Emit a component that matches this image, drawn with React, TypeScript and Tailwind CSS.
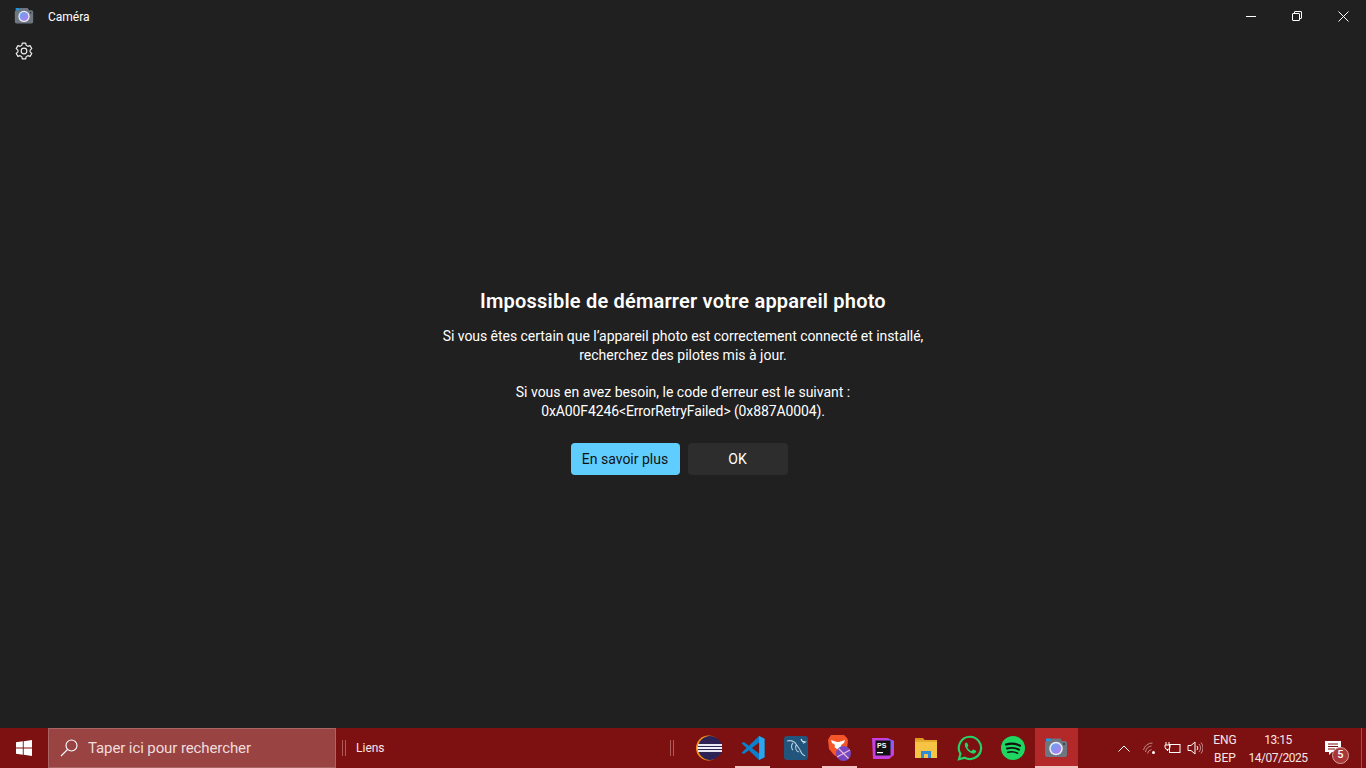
import React from "react";

function CameraIcon({ size = 20 }: { size?: number }) {
  return (
    <svg width={size} height={size} viewBox="0 0 24 24">
      <defs>
        <linearGradient id="lens" x1="0" y1="0" x2="1" y2="1">
          <stop offset="0" stopColor="#62a8f4" />
          <stop offset="1" stopColor="#b878ec" />
        </linearGradient>
      </defs>
      <rect x="2" y="2.500" width="5" height="3" fill="#1e9be8" />
      <path d="M1 7a2 2 0 0 1 2-2h3l1.500-2.500h9L18 5h3a2 2 0 0 1 2 2v12a2 2 0 0 1-2 2H3a2 2 0 0 1-2-2z" fill="#6d7681" />
      <circle cx="12" cy="12.500" r="6.800" fill="#e8edf2" />
      <circle cx="12" cy="12.500" r="5.200" fill="url(#lens)" />
      <circle cx="20" cy="8" r="0.900" fill="#2a2f36" />
    </svg>
  );
}

function Eclipse() {
  return (
    <svg width="26" height="26" viewBox="0 0 26 26">
      <circle cx="12.500" cy="13" r="12.500" fill="#f7941e" />
      <circle cx="14" cy="13" r="12" fill="#2c2255" />
      <rect x="2" y="9" width="24" height="2" fill="#e8e6f2" />
      <rect x="1.500" y="12" width="24.500" height="2" fill="#f2f0f8" />
      <rect x="2" y="15" width="24" height="2" fill="#e8e6f2" />
    </svg>
  );
}

function VSCode() {
  return (
    <svg width="26" height="26" viewBox="0 0 24 24">
      <path d="M17.600 1 8.200 10 3.600 6.400 1.400 7.600 6 12l-4.600 4.400 2.200 1.200L8.200 14l9.400 9 5-2.400V3.400z" fill="#0a7fcb" />
      <path d="M17.600 1l5 2.400v17.200l-5 2.400z" fill="#2aa5ee" />
      <path d="M17.600 7 11 12l6.600 5z" fill="#7d1010" />
    </svg>
  );
}

function MySQL() {
  return (
    <svg width="24" height="24" viewBox="0 0 24 24">
      <rect width="24" height="24" rx="3" fill="#21557c" />
      <path d="M3 5c4-1 7 0 9 3s4 5 5 8 3 3 4 4M9 7c-2 2-2 5 0 7M12 9c-1 3 0 6 3 7" fill="none" stroke="#b9cedd" strokeWidth="1.100" />
      <path d="M17 3l1.500 2.500L21 6l-2 1.200" fill="none" stroke="#d8e4ec" strokeWidth="1.300" />
    </svg>
  );
}

function Brave() {
  return (
    <svg width="26" height="28" viewBox="0 0 26 28">
      <path d="M5 1h13l3 3 1 2-1 9-5 6-4 2-4-2-5-6-1-9 1-2z" fill="#f4562a" />
      <path d="M5 6l6 2h2l6-2-1 3-3 2 .5 2-3.500 3-3.500-3 .5-2-3-2z" fill="#fff" />
      <circle cx="17.500" cy="19.500" r="7.500" fill="#7447c0" />
      <path d="M11 23 24 16M12.500 14.500l10 10" stroke="#e8b8dc" strokeWidth="1.200" />
    </svg>
  );
}

function PhpStorm() {
  return (
    <svg width="24" height="24" viewBox="0 0 24 24">
      <path d="M1 2h15l7 3v14l-5 4H2z" fill="#c640e0" />
      <path d="M16 2l7 3v8l-4 1z" fill="#8a5cf0" />
      <rect x="4.500" y="4.500" width="15" height="15" fill="#111" />
      <text x="6" y="12" fontSize="7" fontWeight="700" fill="#fff" fontFamily="Liberation Sans, sans-serif">PS</text>
      <rect x="6" y="16" width="6" height="1.200" fill="#fff" />
    </svg>
  );
}

function Folder() {
  return (
    <svg width="24" height="22" viewBox="0 0 24 22">
      <path d="M1 1h8l2 2.500H1z" fill="#d99a1c" />
      <rect x="1" y="3" width="22" height="18" fill="#f6c344" />
      <rect x="1" y="3" width="22" height="2" fill="#e5a92b" />
      <path d="M7 14h10v7h-3v-4h-4v4H7z" fill="#2f8bd6" />
    </svg>
  );
}

function WhatsApp() {
  return (
    <svg width="26" height="26" viewBox="0 0 24 24">
      <path d="M12 1.600A10.300 10.300 0 0 0 3.200 17.300L1.800 22.400l5.300-1.400A10.300 10.300 0 1 0 12 1.600z" fill="none" stroke="#25d366" strokeWidth="2" />
      <path d="M8.600 6.900c-.5 0-1.400.8-1.400 2.200 0 3 3.900 7.800 8 8.100 1.400 0 2.500-1 2.500-2.100 0-.4-.2-.5-.5-.7l-2-1c-.4-.1-.6 0-.8.3l-.7.9c-.2.2-.4.2-.7.1-1.300-.6-2.600-1.800-3.300-3-.1-.3-.1-.5.1-.7l.5-.6c.2-.3.2-.5.1-.8l-.8-2c-.2-.4-.4-.5-.7-.5z" fill="#25d366" />
    </svg>
  );
}

function Spotify() {
  return (
    <svg width="24" height="24" viewBox="0 0 24 24">
      <circle cx="12" cy="12" r="12" fill="#1ed760" />
      <path d="M5 8.500c4.500-1.300 10-1 14 1.200" fill="none" stroke="#111" strokeWidth="2.200" strokeLinecap="round" />
      <path d="M6 12.500c4-1.100 8.500-.7 12 1.200" fill="none" stroke="#111" strokeWidth="1.900" strokeLinecap="round" />
      <path d="M6.800 16.200c3.400-.8 7-.5 9.800 1" fill="none" stroke="#111" strokeWidth="1.600" strokeLinecap="round" />
    </svg>
  );
}

function Gear() {
  return (
    <svg width="18" height="18" viewBox="0 0 24 24" fill="none" stroke="#f0f0f0" strokeWidth="1.500" strokeLinejoin="round">
      <path d="M9.700 1.500h4.600l.6 3 2.300 1.300 2.900-1 2.300 4-2.300 2v2.400l2.300 2-2.300 4-2.900-1-2.300 1.300-.6 3H9.700l-.6-3-2.300-1.300-2.900 1-2.300-4 2.300-2v-2.400l-2.300-2 2.300-4 2.900 1L9.100 4.500z" />
      <circle cx="12" cy="12" r="3.800" />
    </svg>
  );
}

function TaskIcon({ children, mark, active }: { children: React.ReactNode; mark?: boolean; active?: boolean }) {
  return (
    <div className={`relative flex h-10 w-[43.4px] items-center justify-center ${active ? "bg-[#b32828]" : ""}`}>
      {children}
      {mark && <div className={`absolute bottom-0 h-[2px] bg-[#f2c4c4] ${active ? "inset-x-0" : "inset-x-1"}`} />}
    </div>
  );
}

export default function App() {
  return (
    <div className="flex h-[768px] w-[1366px] flex-col overflow-hidden bg-[#202020] font-['Roboto','Open_Sans',sans-serif] text-white">
      <header className="flex h-8 shrink-0 items-center">
        <div className="ml-[14px] flex w-5 items-center"><CameraIcon /></div>
        <span className="ml-[14px] pt-[2px] text-xs">Caméra</span>
        <div className="ml-auto flex h-8 items-center">
          <div className="flex w-[46px] justify-center">
            <svg width="10" height="10" viewBox="0 0 10 10"><path d="M0 5.500h10" stroke="#fff" /></svg>
          </div>
          <div className="flex w-[46px] justify-center">
            <svg width="10" height="10" viewBox="0 0 10 10" fill="none" stroke="#fff"><rect x="0.500" y="2.500" width="7" height="7" rx="0.500" /><path d="M2.500 2.500V1a.5.5 0 0 1 .5-.5h6a.5.5 0 0 1 .5.5v6a.5.5 0 0 1-.5.5H7.500" /></svg>
          </div>
          <div className="flex w-[46px] justify-center">
            <svg width="11" height="11" viewBox="0 0 11 11" stroke="#fff"><path d="M.5.500l10 10M10.500.500l-10 10" /></svg>
          </div>
        </div>
      </header>
      <div className="flex h-9 shrink-0 items-center pl-[15px] pt-[2px]"><Gear /></div>

      <main className="flex flex-1 flex-col items-center pt-[219px]">
        <h1 className="text-[20px] leading-7 font-semibold tracking-[0.2px]">Impossible de démarrer votre appareil photo</h1>
        <div className="mt-[12px] text-center text-sm leading-[18.700px]">
          <p className="tracking-[-0.04px]">Si vous êtes certain que l’appareil photo est correctement connecté et installé,</p>
          <p>recherchez des pilotes mis à jour.</p>
          <p className="mt-[18.500px]">Si vous en avez besoin, le code d’erreur est le suivant :</p>
          <p className="tracking-[-0.12px]">0xA00F4246&lt;ErrorRetryFailed&gt; (0x887A0004).</p>
        </div>
        <div className="mt-[23px] flex gap-2 pr-[8px]">
          <button className="h-8 w-[109px] rounded-[4px] bg-[#60cdff] text-sm text-[#111]">En savoir plus</button>
          <button className="h-8 w-[100px] rounded-[4px] bg-[#2d2d2d] text-sm text-white">OK</button>
        </div>
      </main>

      <footer className="flex h-10 shrink-0 items-center bg-[#7d1010]">
        <div className="flex h-10 w-[48px] shrink-0 items-center justify-center">
          <svg width="16" height="16" viewBox="0 0 16 16" fill="#fff"><path d="M0 2.300 6.800 1.300v6.200H0zM7.700 1.200 16 0v7.500H7.700zM0 8.400h6.800v6.300L0 13.700zM7.700 8.400H16V16l-8.300-1.200z" /></svg>
        </div>
        <div className="flex h-10 w-[288px] shrink-0 items-center border border-[#a96464] bg-[#994343] pl-[11px]">
          <svg width="18" height="18" viewBox="0 0 18 18" fill="none" stroke="#fff" strokeWidth="1.100"><circle cx="11.500" cy="6.500" r="5.500" /><path d="M7.500 10.500 1 17" /></svg>
          <span className="ml-[10px] text-[15px] tracking-[-0.1px] text-[#f0dcdc]">Taper ici pour rechercher</span>
        </div>
        <div className="ml-[6px] h-4 w-[4px] shrink-0 border-x border-[#b05a5a]" />
        <span className="ml-[10px] text-xs text-[#f5e6e6]">Liens</span>
        <div className="flex flex-1 items-center justify-end">
          <div className="mr-[13px] h-4 w-[4px] border-x border-[#b05a5a]" />
          <TaskIcon><Eclipse /></TaskIcon>
          <TaskIcon mark><VSCode /></TaskIcon>
          <TaskIcon><MySQL /></TaskIcon>
          <TaskIcon mark><Brave /></TaskIcon>
          <TaskIcon><PhpStorm /></TaskIcon>
          <TaskIcon><Folder /></TaskIcon>
          <TaskIcon><WhatsApp /></TaskIcon>
          <TaskIcon><Spotify /></TaskIcon>
          <TaskIcon mark active><CameraIcon size={24} /></TaskIcon>
        </div>
        <div className="ml-[35px] flex w-[22px] justify-center">
          <svg width="12" height="7" viewBox="0 0 12 7" fill="none" stroke="#fff"><path d="M.5 6.500 6 1l5.500 5.500" /></svg>
        </div>
        <div className="ml-[4px] flex w-[22px] justify-center">
          <svg width="14" height="14" viewBox="0 0 14 14" fill="none" stroke="#c98a8a" strokeWidth="1"><path d="M.5 9a9 9 0 0 1 9-7M2.500 11a7 7 0 0 1 6-6M4.500 12.500a5 5 0 0 1 4-4" /><circle cx="10.500" cy="11.500" r="1.500" fill="#fff" stroke="none" /></svg>
        </div>
        <div className="flex w-[22px] justify-center">
          <svg width="17" height="12" viewBox="0 0 17 12" fill="none" stroke="#fff"><rect x="5.500" y="2.500" width="10.500" height="8" /><path d="M2 0v3M5 0v3M1 3h5v2a2 2 0 0 1-5 0zM3.500 7v2" /></svg>
        </div>
        <div className="flex w-[23px] justify-center">
          <svg width="16" height="14" viewBox="0 0 16 14" fill="none" stroke="#fff"><path d="M1 4.500h3L8 1v12L4 9.500H1z" /><path d="M10 5a3 3 0 0 1 0 4" /><path d="M12 3a6 6 0 0 1 0 8M14 1.500a8.500 8.500 0 0 1 0 11" stroke="#c98a8a" /></svg>
        </div>
        <div className="ml-[3px] flex w-[32px] flex-col items-center pt-[1px] text-xs leading-[18px] text-[#f5e6e6]"><span>ENG</span><span>BEP</span></div>
        <div className="ml-[2px] flex w-[70px] flex-col items-center pt-[1px] text-xs leading-[18px] tracking-[-0.5px] text-[#f5e6e6]"><span>13:15</span><span>14/07/2025</span></div>
        <div className="relative ml-[8px] flex w-[24px] justify-center">
          <svg width="16" height="15" viewBox="0 0 16 15" fill="#fff"><path d="M0 0h16v11H7l-3 3v-3H0z" /><path d="M3 3h10M3 5.500h10M3 8h7" stroke="#7d1010" /></svg>
          <div className="absolute left-[11px] top-[6px] flex h-[17px] w-[17px] items-center justify-center rounded-full border border-[#d8a0a0] bg-[#a83838] text-[11px] font-medium">5</div>
        </div>
        <div className="ml-[16px] h-10 w-[5px] border-l border-[#a05050]" />
      </footer>
    </div>
  );
}
